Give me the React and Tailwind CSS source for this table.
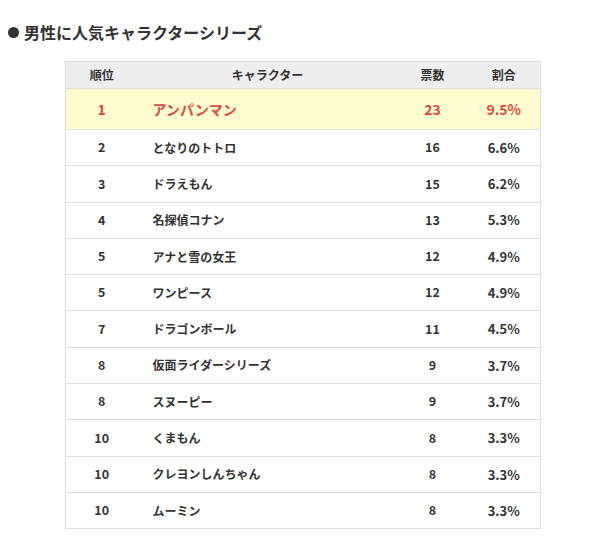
import React from "react";

const rows = [
  ["2", "となりのトトロ", "16", "6.6%"],
  ["3", "ドラえもん", "15", "6.2%"],
  ["4", "名探偵コナン", "13", "5.3%"],
  ["5", "アナと雪の女王", "12", "4.9%"],
  ["5", "ワンピース", "12", "4.9%"],
  ["7", "ドラゴンボール", "11", "4.5%"],
  ["8", "仮面ライダーシリーズ", "9", "3.7%"],
  ["8", "スヌーピー", "9", "3.7%"],
  ["10", "くまもん", "8", "3.3%"],
  ["10", "クレヨンしんちゃん", "8", "3.3%"],
  ["10", "ムーミン", "8", "3.3%"],
];

export default function App() {
  return (
    <div
      className="w-[600px] h-[560px] bg-white text-[#333]"
      style={{ fontFamily: '"Noto Sans CJK JP", "Noto Sans", sans-serif' }}
    >
      <div className="pt-[21px] pl-[8px] flex items-center h-[22px] box-content">
        <span className="w-[11px] h-[11px] rounded-full bg-[#333] mr-[5px]" />
        <span className="text-[16px] font-bold leading-none">男性に人気キャラクターシリーズ</span>
      </div>
      <div className="pl-[65px] pt-[18px]">
        <table className="border-collapse w-[476px] border border-[#ddd] font-bold">
          <thead>
            <tr className="bg-[#eeeeee] h-[27px] text-[12px]">
              <th className="w-[72px] border-y border-[#ddd] font-bold">順位</th>
              <th className="w-[260px] border-y border-[#ddd] font-bold">キャラクター</th>
              <th className="w-[70px] border-y border-[#ddd] font-bold">票数</th>
              <th className="border-y border-[#ddd] font-bold">割合</th>
            </tr>
          </thead>
          <tbody>
            <tr className="bg-[#fffdd0] h-[41px] text-[#db4a3e] text-[14px]">
              <td className="text-center border-y border-[#ddd]">1</td>
              <td className="pl-[15px] border-y border-[#ddd]">アンパンマン</td>
              <td className="text-center border-y border-[#ddd]">23</td>
              <td className="text-center border-y border-[#ddd]">9.5%</td>
            </tr>
            {rows.map((r, i) => (
              <tr key={i} className="h-[36.3px] text-[12px]">
                <td className="text-center border-y border-[#ddd] text-[12.5px]">{r[0]}</td>
                <td className="pl-[15px] border-y border-[#ddd]">{r[1]}</td>
                <td className="text-center border-y border-[#ddd] text-[12.5px]">{r[2]}</td>
                <td className="text-center border-y border-[#ddd] text-[13px]">{r[3]}</td>
              </tr>
            ))}
          </tbody>
        </table>
      </div>
    </div>
  );
}
